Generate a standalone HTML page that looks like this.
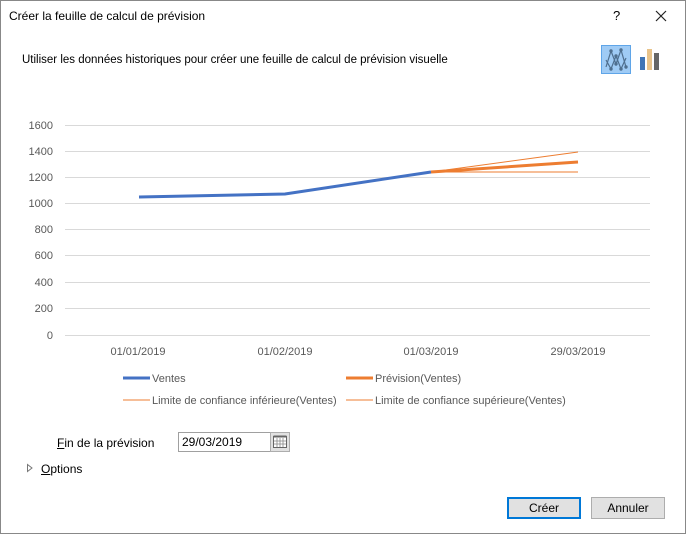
<!DOCTYPE html>
<html><head><style>
body{margin:0;width:686px;height:534px;background:#fff;font-family:"Liberation Sans",sans-serif;font-size:12px;color:#000;position:relative;overflow:hidden}
.win{position:absolute;left:0;top:0;width:684px;height:532px;border:1px solid #888}
.a{position:absolute;white-space:nowrap}
.btn{position:absolute;width:72px;height:20px;border:1px solid #adadad;background:#e1e1e1;text-align:center;line-height:20px;font-size:12px}
</style></head><body>
<div class="win"></div>
<div class="a" style="left:9px;top:9px;font-size:12px">Créer la feuille de calcul de prévision</div>
<div class="a" style="left:613px;top:8px;font-size:13px">?</div>
<svg class="a" style="left:655px;top:10px" width="12" height="12"><path d="M1 1L11 11M11 1L1 11" stroke="#222" stroke-width="1.2"/></svg>
<div class="a" style="left:22px;top:54px;font-size:11.5px">Utiliser les données historiques pour créer une feuille de calcul de prévision visuelle</div>
<svg class="a" style="left:601px;top:45px" width="32" height="30">
<rect x="0.5" y="0.5" width="29" height="28" fill="#9fcbf5" stroke="#5fa5e8"/>
<path d="M5 15L10 24L15 11L20 24L25 13" fill="none" stroke="#4f6f8f" stroke-width="1.2"/>
<path d="M5 22L10 6L15 19L20 5L25 22" fill="none" stroke="#4f6f8f" stroke-width="1.2"/>
<g fill="#4f6f8f"><circle cx="10" cy="24" r="1.7"/><circle cx="10" cy="6" r="1.7"/><circle cx="15" cy="11" r="1.7"/><circle cx="15" cy="19" r="1.7"/><circle cx="20" cy="5" r="1.7"/><circle cx="20" cy="24" r="1.7"/><circle cx="25" cy="22" r="1.7"/></g>
</svg>
<svg class="a" style="left:639px;top:47px" width="24" height="24">
<rect x="1" y="10" width="5" height="13" fill="#3f74b5"/><rect x="8" y="2" width="5" height="21" fill="#e8c38a"/><rect x="15" y="6" width="5" height="17" fill="#666"/>
</svg>
<svg class="a" style="left:0;top:110px" width="686" height="250">
<g stroke="#d9d9d9" stroke-width="1">
<line x1="65" x2="650" y1="15.5" y2="15.5"/><line x1="65" x2="650" y1="41.5" y2="41.5"/><line x1="65" x2="650" y1="67.5" y2="67.5"/><line x1="65" x2="650" y1="93.5" y2="93.5"/><line x1="65" x2="650" y1="119.5" y2="119.5"/><line x1="65" x2="650" y1="145.5" y2="145.5"/><line x1="65" x2="650" y1="172.5" y2="172.5"/><line x1="65" x2="650" y1="198.5" y2="198.5"/>
<line x1="65" x2="650" y1="225.5" y2="225.5"/></g>
<g font-size="11" fill="#595959" text-anchor="end">
<text x="53" y="19">1600</text><text x="53" y="45">1400</text><text x="53" y="71">1200</text><text x="53" y="97">1000</text><text x="53" y="123">800</text><text x="53" y="149">600</text><text x="53" y="176">400</text><text x="53" y="202">200</text><text x="53" y="229">0</text></g>
<g font-size="11" fill="#595959" text-anchor="middle">
<text x="138" y="245">01/01/2019</text><text x="285" y="245">01/02/2019</text><text x="431" y="245">01/03/2019</text><text x="578" y="245">29/03/2019</text></g>
<path d="M431 62L578 42" stroke="#ed7d31" stroke-width="1"/>
<path d="M431 62L578 62" stroke="#ed7d31" stroke-width="1"/>
<path d="M431 62L578 52" stroke="#ed7d31" stroke-width="3"/>
<path d="M139 87L285 84L431 62" fill="none" stroke="#4472c4" stroke-width="3"/>
</svg>
<svg class="a" style="left:120px;top:370px" width="480" height="40">
<line x1="3" x2="30" y1="8" y2="8" stroke="#4472c4" stroke-width="3"/>
<line x1="226" x2="253" y1="8" y2="8" stroke="#ed7d31" stroke-width="3"/>
<line x1="3" x2="30" y1="30" y2="30" stroke="#ed7d31" stroke-width="1"/>
<line x1="226" x2="253" y1="30" y2="30" stroke="#ed7d31" stroke-width="1"/>
<g font-size="11" fill="#595959"><text x="32" y="12">Ventes</text><text x="255" y="12">Prévision(Ventes)</text><text x="32" y="34">Limite de confiance inférieure(Ventes)</text><text x="255" y="34">Limite de confiance supérieure(Ventes)</text></g>
</svg>
<div class="a" style="left:57px;top:436px"><u>F</u>in de la prévision</div>
<div class="a" style="left:178px;top:432px;width:88px;height:18px;border:1px solid #a0a0a0;line-height:18px;padding-left:3px;box-sizing:content-box">29/03/2019</div>
<svg class="a" style="left:270px;top:432px" width="20" height="20"><rect x="0.5" y="0.5" width="19" height="19" fill="#e1e1e1" stroke="#adadad"/><rect x="3.5" y="4.5" width="13" height="11" fill="#fff" stroke="#666"/><rect x="3.5" y="3.5" width="13" height="2" fill="#666"/><path d="M7 6v9M10 6v9M13 6v9M4 9h12M4 12h12" stroke="#888" stroke-width="0.8"/></svg>
<svg class="a" style="left:26px;top:463px" width="8" height="10"><path d="M1.5 1.5L6 5L1.5 8.5Z" fill="none" stroke="#777"/></svg>
<div class="a" style="left:41px;top:462px"><u>O</u>ptions</div>
<div class="btn" style="left:507px;top:497px;border:1px solid #0078d7;box-shadow:inset 0 0 0 1px #0078d7">Créer</div>
<div class="btn" style="left:591px;top:497px">Annuler</div>
</body></html>
